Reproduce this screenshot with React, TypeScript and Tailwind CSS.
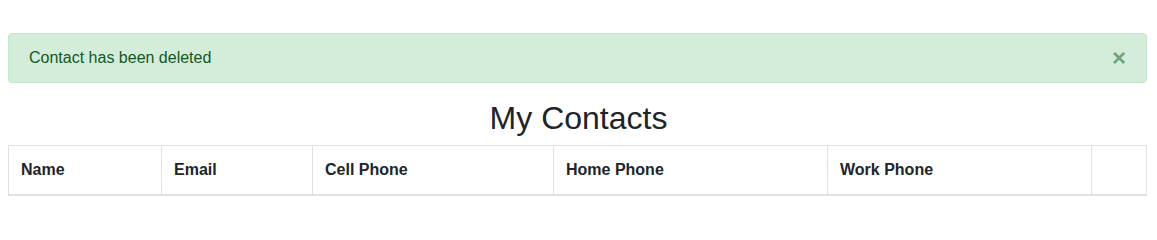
const columns = [
  { label: "Name", w: "w-[153px]" },
  { label: "Email", w: "w-[151px]" },
  { label: "Cell Phone", w: "w-[241px]" },
  { label: "Home Phone", w: "w-[274px]" },
  { label: "Work Phone", w: "w-[264px]" },
  { label: "", w: "" },
];

export default function App() {
  return (
    <div className="min-h-[222px] bg-white px-2 pt-[33px] font-['Liberation_Sans',Arial,sans-serif] text-[#212529]">
      {/* Alert */}
      <div className="relative mb-4 w-[1139px] rounded border border-[#c3e6cb] bg-[#d4edda] px-5 py-3 pr-16 text-base leading-6 text-[#155724]">
        Contact has been deleted
        <button
          type="button"
          className="absolute right-0 top-0 px-5 py-3 text-2xl font-bold leading-6 text-[#155724] opacity-50"
        >
          <span aria-hidden="true">×</span>
        </button>
      </div>

      <h2 className="mb-2 text-center text-[32px] font-medium leading-[1.2]">My Contacts</h2>

      <table className="w-[1139px] table-fixed border-collapse border border-[#dee2e6]">
        <thead>
          <tr>
            {columns.map((c, i) => (
              <th
                key={i}
                className={`${c.w} border border-b-2 border-[#dee2e6] p-3 text-left align-bottom text-base font-bold leading-6`}
              >
                {c.label}
              </th>
            ))}
          </tr>
        </thead>
      </table>
    </div>
  );
}
